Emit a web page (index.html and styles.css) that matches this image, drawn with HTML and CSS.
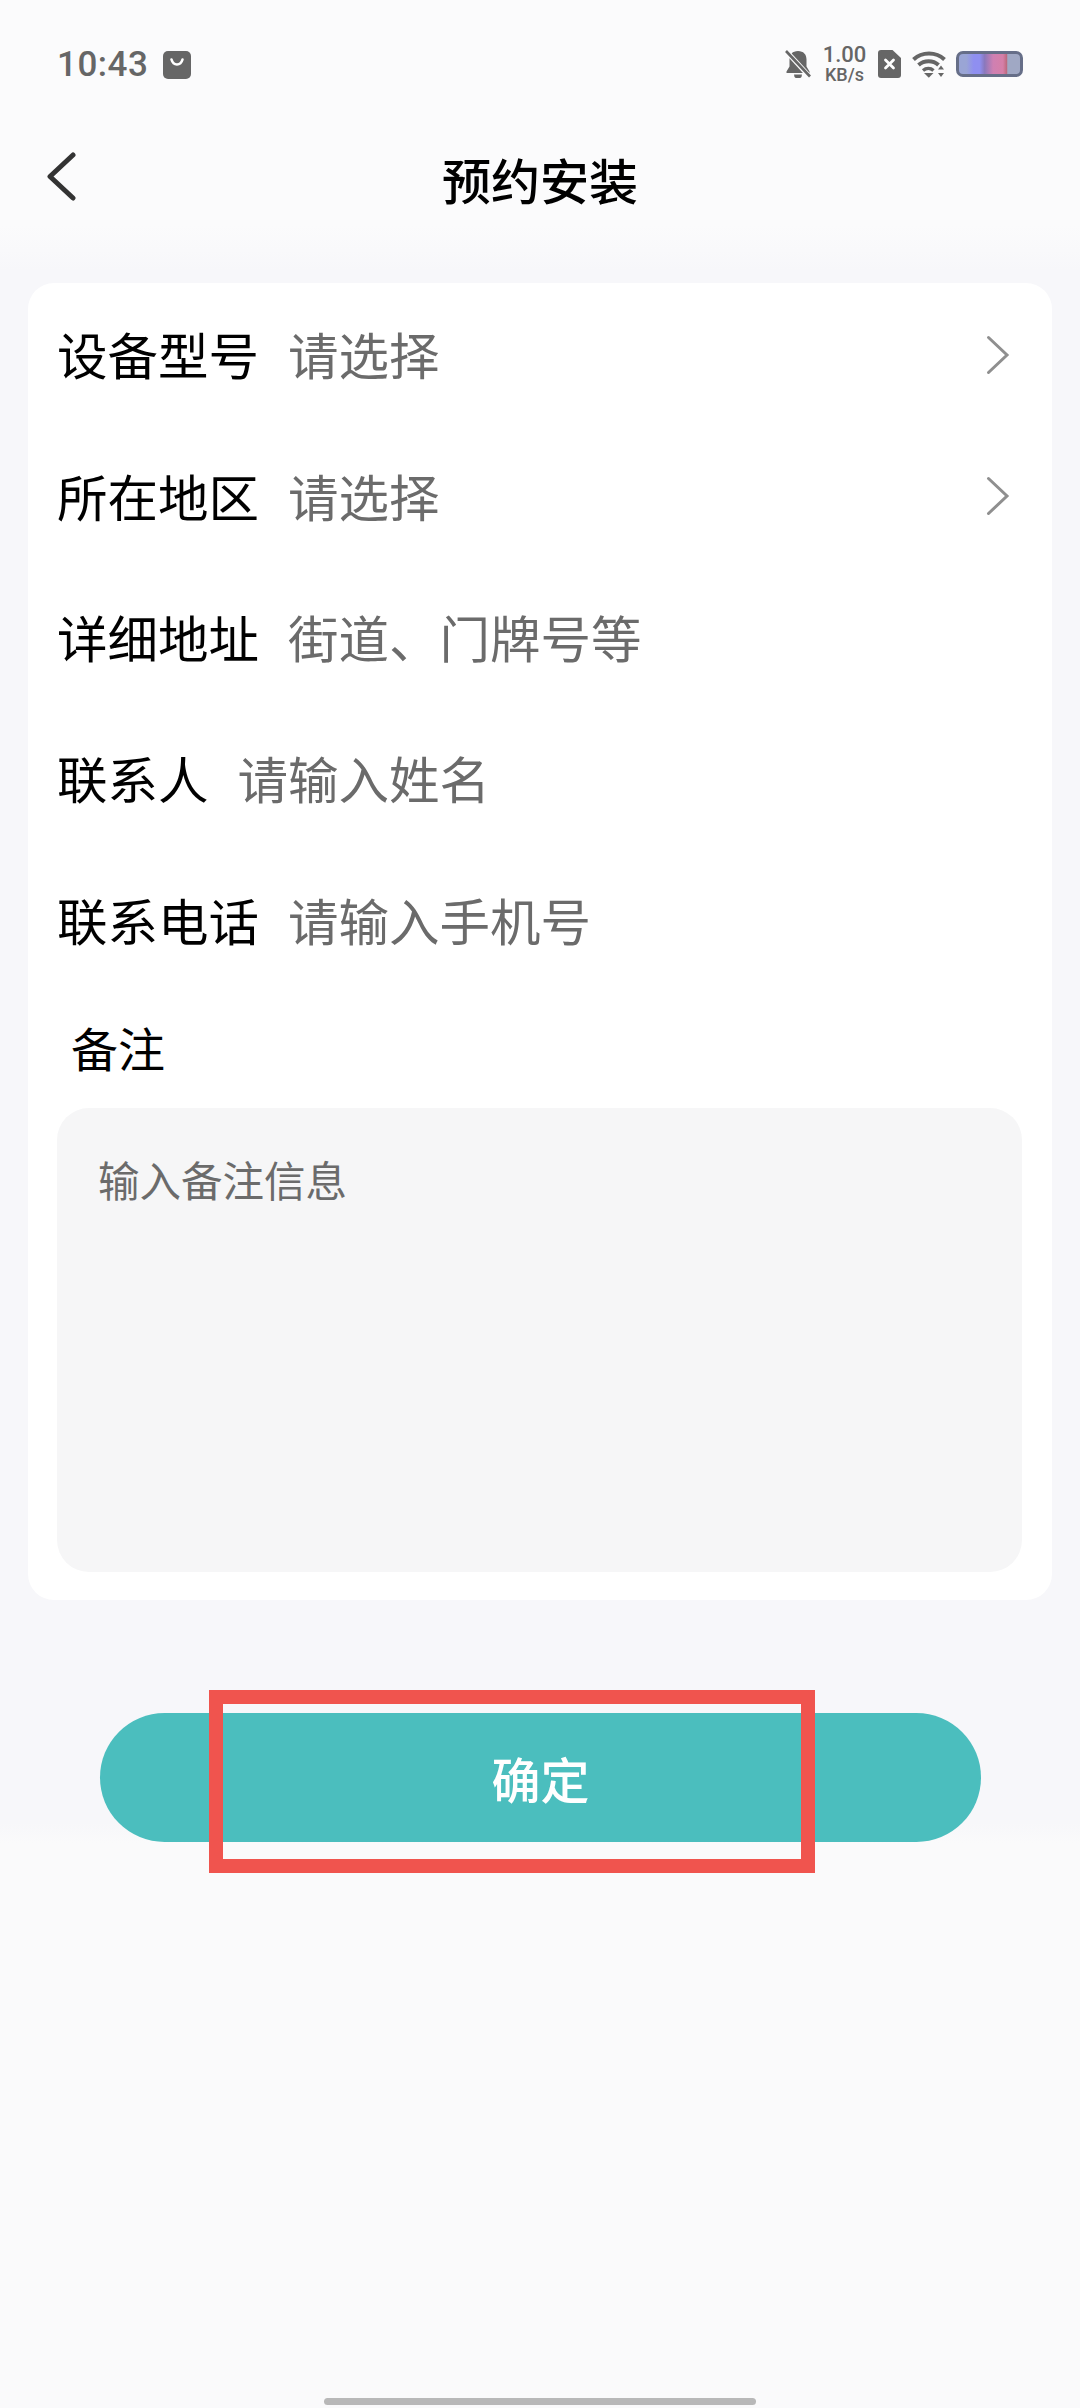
FILE: index.html
```html
<!DOCTYPE html>
<html lang="zh-CN">
<head>
<meta charset="utf-8">
<title>预约安装</title>
<link rel="stylesheet" href="styles.css">
</head>
<body>
<div class="app">
  <header class="top">
    <div class="status">
      <div class="status-left">
        <span class="time">10:43</span>
        <svg class="ic-bag" viewBox="0 0 28 28"><rect width="28" height="28" rx="5" fill="#666"/><path d="M8.5 8.5c1 3.6 3 5 5.5 5s4.5-1.4 5.500-5" fill="none" stroke="#fff" stroke-width="2.6" stroke-linecap="round"/></svg>
      </div>
      <div class="status-right">
        <svg class="ic-bell" viewBox="0 0 26 28"><path d="M13 1c5.500 0 8.500 3.500 8.500 8.500v7l3 5v1.500H1.500v-1.500l3-5v-7C4.500 4.500 7.500 1 13 1z" fill="#666"/><path d="M9 24.500h8a4 4 0 0 1-8 0z" fill="#666"/><path d="M1 1l24 26" stroke="#fbfbfc" stroke-width="5"/><path d="M1 1l24 25.500" stroke="#666" stroke-width="2.6"/></svg>
        <div class="speed"><span class="speed-num">1.00</span><span class="speed-unit">KB/s</span></div>
        <svg class="ic-sim" viewBox="0 0 23 28"><path d="M3 0h11.500L23 8v17a3 3 0 0 1-3 3H3a3 3 0 0 1-3-3V3a3 3 0 0 1 3-3z" fill="#666"/><path d="M7.500 10l8 8M15.500 10l-8 8" stroke="#fff" stroke-width="2.8" stroke-linecap="round"/></svg>
        <svg class="ic-wifi" viewBox="0 0 34 27"><path d="M1.500 8.500C10 .5 24 .5 32.500 8.500" fill="none" stroke="#666" stroke-width="4"/><path d="M6.500 14c5.800-5 14.500-5 20 0" fill="none" stroke="#666" stroke-width="4"/><path d="M11 19.500c3.200-2.700 7.500-2.700 10.500 0" fill="none" stroke="#666" stroke-width="3.400"/><path d="M12 22h9.500l-4.700 4.800z" fill="#666"/><path d="M29 14.500l3 4h-6zM29 26l-3-4h6z" fill="#666"/></svg>
        <div class="battery"></div>
      </div>
    </div>
    <nav class="nav">
      <svg class="back" viewBox="0 0 30 50"><path d="M27 3L4 24.500 27 46" fill="none" stroke="#333" stroke-width="5" stroke-linecap="round" stroke-linejoin="round"/></svg>
      <h1 class="title">预约安装</h1>
    </nav>
  </header>

  <main class="content">
    <section class="card">
      <div class="row"><span class="label">设备型号</span><span class="hint">请选择</span>
        <svg class="chev" viewBox="0 0 24 40"><path d="M2.500 2.500L21 20 2.500 37.500" fill="none" stroke="#8f8f8f" stroke-width="3" stroke-linecap="round"/></svg></div>
      <div class="row"><span class="label">所在地区</span><span class="hint">请选择</span>
        <svg class="chev" viewBox="0 0 24 40"><path d="M2.500 2.500L21 20 2.500 37.500" fill="none" stroke="#8f8f8f" stroke-width="3" stroke-linecap="round"/></svg></div>
      <div class="row"><span class="label">详细地址</span><span class="hint">街道、门牌号等</span></div>
      <div class="row"><span class="label">联系人</span><span class="hint">请输入姓名</span></div>
      <div class="row"><span class="label">联系电话</span><span class="hint">请输入手机号</span></div>
      <div class="note-label">备注</div>
      <div class="note-box">输入备注信息</div>
    </section>
    <div class="button-wrap">
      <button class="confirm">确定</button>
      <div class="highlight"></div>
    </div>
  </main>

  <footer class="bottom"><div class="home-bar"></div></footer>
</div>
</body>
</html>
```

FILE: styles.css
```css
* { box-sizing: border-box; }
html, body { margin: 0; padding: 0; }
body {
  width: 1080px;
  height: 2408px;
  background: #fafafb;
  font-family: "Noto Sans CJK SC", "Noto Sans", sans-serif;
  overflow: hidden;
}
.app { display: flex; flex-direction: column; height: 2408px; }

.top {
  height: 250px;
  background: linear-gradient(#fbfbfc 225px, #f9f9fb 250px);
  display: flex;
  flex-direction: column;
  flex: none;
}
.status {
  height: 124px;
  padding: 47px 57px 0;
  display: flex;
  justify-content: space-between;
  align-items: flex-start;
  flex: none;
}
.status-left { display: flex; align-items: center; gap: 15px; height: 32px; }
.time {
  font-family: Roboto, "Noto Sans", sans-serif;
  font-size: 35px;
  font-weight: 500;
  line-height: 32px;
  color: #666;
  letter-spacing: 0.5px;
  padding-top: 3px;
}
.ic-bag { width: 28px; height: 28px; display: block; margin-top: 3px; }
.status-right { display: flex; align-items: flex-start; }
.ic-bell { width: 26px; height: 28px; margin: 3px 11px 0 0; flex: none; }
.speed {
  width: 45px;
  display: flex;
  flex-direction: column;
  align-items: center;
  font-family: Roboto, "Noto Sans", sans-serif;
  font-weight: 500;
  color: #666;
  margin: -2px 11px 0 0;
}
.speed-num { font-size: 22px; line-height: 20px; }
.speed-unit { font-size: 18px; line-height: 20px; }
.ic-sim { width: 23px; height: 28px; margin: 3px 11px 0 0; flex: none; }
.ic-wifi { width: 34px; height: 27px; margin: 4px 10px 0 0; flex: none; }
.battery {
  width: 67px;
  height: 26px;
  margin-top: 4px;
  border: 3px solid #666e88;
  border-radius: 7px;
  background: linear-gradient(90deg, #9aa5d5 0 12%, #8f8ff0 24%, #8f8ff0 34%, #8a78bc 42%, #cf80b2 56%, #d67fa8 72%, #bd6a80 78%, #a0a8c4 80% 100%);
}

.nav { position: relative; height: 112px; padding-bottom: 4px; display: flex; align-items: center; justify-content: center; flex: none; }
.back { position: absolute; left: 46px; top: 28px; width: 30px; height: 50px; }
.title { margin: 0; font-size: 49px; font-weight: 500; color: #000; line-height: 1; }

.content {
  height: 1593px;
  background: linear-gradient(#f9f9fb 0, #f7f7fa 20px, #f7f7fa calc(100% - 20px), #fafafb 100%);
  padding: 33px 28px 0;
  flex: none;
}
.card {
  height: 1317px;
  background: #fff;
  border-radius: 26px;
  padding: 0 30px 0 29px;
  display: flex;
  flex-direction: column;
}
.row { height: 141.3px; display: flex; align-items: center; position: relative; flex: none; }
.label { font-size: 50.5px; color: #000; line-height: 1; }
.hint { margin-left: 29px; font-size: 50.5px; color: #6b6b6b; line-height: 1; }
.chev { position: absolute; right: 12px; top: 52px; width: 24px; height: 40px; }
.note-label {
  font-size: 47px;
  line-height: 60px;
  color: #000;
  margin: 28px 0 31px 14px;
}
.note-box {
  height: 464px;
  border-radius: 32px;
  background: #f6f6f7;
  padding: 45px 41px;
  font-size: 41.5px;
  line-height: 52px;
  color: #6b6b6b;
}

.button-wrap { position: relative; margin: 113px 71px 0 72px; }
.confirm {
  display: block;
  width: 100%;
  height: 129px;
  border: 0;
  border-radius: 65px;
  background: #4bbebe;
  color: #fff;
  font-family: inherit;
  font-size: 49px;
  font-weight: 500;
  padding: 0;
}
.highlight {
  position: absolute;
  left: 109px;
  top: -23px;
  width: 606px;
  height: 183px;
  border: 14px solid #f0544e;
}

.bottom { flex: 1; display: flex; justify-content: center; align-items: flex-end; padding-bottom: 3px; background: #fafafb; }
.home-bar { width: 432px; height: 7px; border-radius: 3.5px; background: #b8b8b8; }
```
